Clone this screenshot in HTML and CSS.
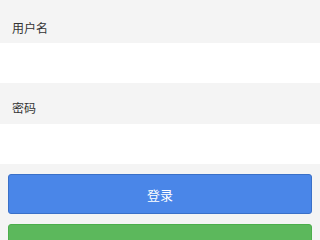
FILE: index.html
```html
<!DOCTYPE html>
<html lang="zh">
<head>
<meta charset="utf-8">
<link rel="stylesheet" href="styles.css">
</head>
<body>
<form class="form">
  <label class="label label-first">用户名</label>
  <input class="input" type="text">
  <label class="label">密码</label>
  <input class="input" type="password">
  <div class="actions">
    <button type="button" class="btn btn-primary">登录</button>
    <button type="button" class="btn btn-success" aria-label="注册"></button>
  </div>
</form>
</body>
</html>
```
FILE: styles.css
```css
html, body {
  margin: 0;
  padding: 0;
  background: #f4f4f4;
  font-family: "Noto Sans CJK SC", "Noto Sans", sans-serif;
}
.form {
  display: flex;
  flex-direction: column;
  margin: 0;
}
.label {
  display: block;
  box-sizing: border-box;
  height: 41px;
  padding: 16px 12px 0;
  font-size: 12px;
  line-height: 17px;
  color: #333;
}
.label-first {
  height: 43px;
  padding-top: 19px;
}
.input {
  box-sizing: border-box;
  height: 40px;
  width: 100%;
  margin: 0;
  border: none;
  background: #fff;
  outline: none;
}
.actions {
  display: flex;
  flex-direction: column;
  gap: 10px;
  padding: 10px 8px;
}
.btn {
  box-sizing: border-box;
  height: 40px;
  width: 100%;
  border-radius: 3px;
  font-family: inherit;
  font-size: 13px;
  color: #fff;
}
.btn-primary {
  background: #4a86e8;
  border: 1px solid #3a70c8;
}
.btn-success {
  background: #5cb85c;
  border: 1px solid #4cae4c;
}
```
